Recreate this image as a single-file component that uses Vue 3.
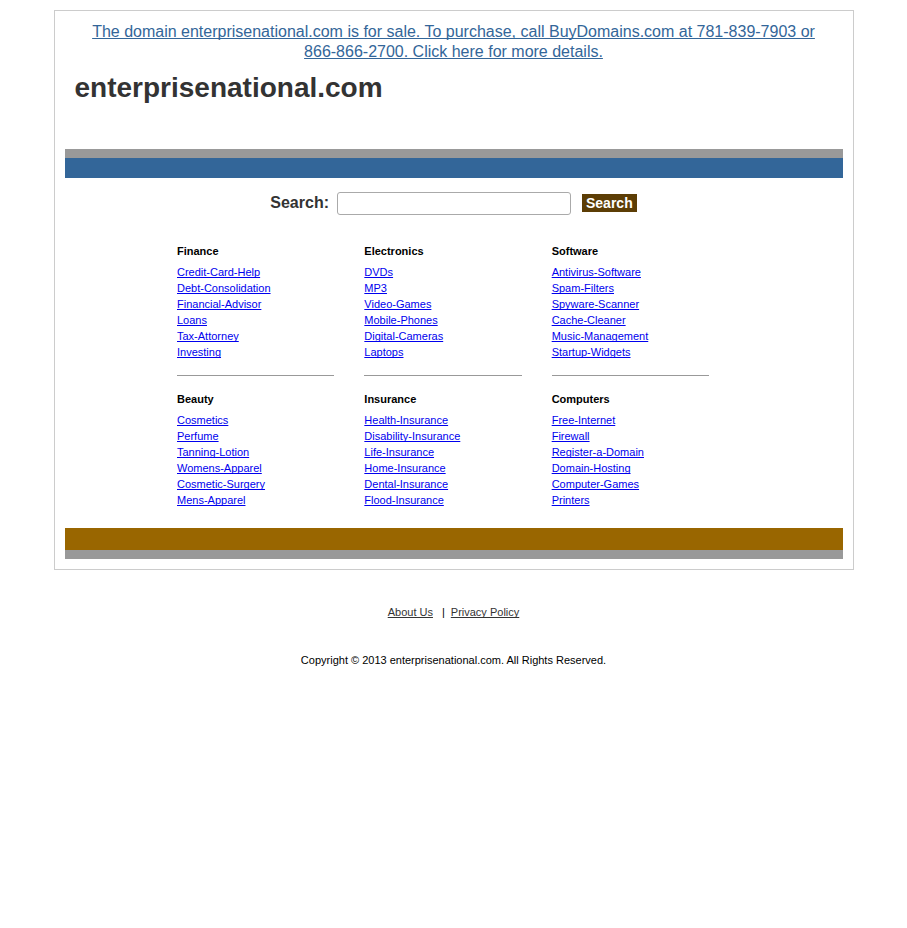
<script setup>
import { ref } from 'vue'

const domain = 'enterprisenational.com'
const query = ref('')

const categories = [
  { name: 'Finance', links: ['Credit-Card-Help', 'Debt-Consolidation', 'Financial-Advisor', 'Loans', 'Tax-Attorney', 'Investing'] },
  { name: 'Electronics', links: ['DVDs', 'MP3', 'Video-Games', 'Mobile-Phones', 'Digital-Cameras', 'Laptops'] },
  { name: 'Software', links: ['Antivirus-Software', 'Spam-Filters', 'Spyware-Scanner', 'Cache-Cleaner', 'Music-Management', 'Startup-Widgets'] },
  { name: 'Beauty', links: ['Cosmetics', 'Perfume', 'Tanning-Lotion', 'Womens-Apparel', 'Cosmetic-Surgery', 'Mens-Apparel'] },
  { name: 'Insurance', links: ['Health-Insurance', 'Disability-Insurance', 'Life-Insurance', 'Home-Insurance', 'Dental-Insurance', 'Flood-Insurance'] },
  { name: 'Computers', links: ['Free-Internet', 'Firewall', 'Register-a-Domain', 'Domain-Hosting', 'Computer-Games', 'Printers'] }
]
</script>

<template>
  <div class="page">
    <main class="panel">
      <header class="header">
        <p class="sale">
          <a href="#">The domain {{ domain }} is for sale. To purchase, call BuyDomains.com at 781-839-7903 or 866-866-2700. Click here for more details.</a>
        </p>
        <h1 class="title">{{ domain }}</h1>
      </header>

      <div class="bar-top"></div>

      <form class="search" @submit.prevent>
        <label class="search-label" for="query">Search:</label>
        <input id="query" v-model="query" class="search-input" type="text" />
        <button class="search-button" type="submit">Search</button>
      </form>

      <div class="categories">
        <section v-for="category in categories" :key="category.name" class="category">
          <h2 class="category-name">{{ category.name }}</h2>
          <ul class="links">
            <li v-for="link in category.links" :key="link"><a href="#">{{ link }}</a></li>
          </ul>
        </section>
      </div>

      <div class="bar-bottom"></div>
    </main>

    <footer class="footer">
      <nav class="footer-nav">
        <a href="#">About Us</a>
        <span class="separator">|</span>
        <a href="#">Privacy Policy</a>
      </nav>
      <p class="copyright">Copyright © 2013 {{ domain }}. All Rights Reserved.</p>
    </footer>
  </div>
</template>

<style>
body {
  margin: 0;
  background: #fff;
}
</style>

<style scoped>
.page {
  padding: 10px;
  font-family: "Liberation Sans", Arial, Helvetica, sans-serif;
  font-size: 11px;
  line-height: 16px;
  color: #000;
}

a {
  text-decoration-skip-ink: none;
}

.panel {
  box-sizing: border-box;
  max-width: 800px;
  margin: 0 auto;
  padding: 10px;
  border: 1px solid #ccc;
}

.header {
  padding: 1px 10px 45px;
}

.sale {
  margin: 0;
  text-align: center;
  font-size: 16px;
  line-height: 20px;
}

.sale a {
  color: #369;
}

.title {
  margin: 9px 0 0;
  font-size: 28px;
  line-height: 33px;
  color: #333;
}

.bar-top {
  height: 20px;
  border-top: 9px solid #999;
  background: #369;
}

.bar-bottom {
  height: 22px;
  border-bottom: 9px solid #999;
  background: #960;
}

.search {
  display: flex;
  align-items: flex-start;
  justify-content: center;
  padding: 14px 0 28px;
}

.search-label {
  margin-right: 8px;
  font-size: 16px;
  line-height: 22px;
  font-weight: bold;
  color: #333;
}

.search-input {
  box-sizing: border-box;
  width: 234px;
  height: 23px;
  margin-right: 11px;
  padding: 1px 4px;
  border: 1px solid #aaa;
  border-radius: 3px;
  background: #fff;
  font: inherit;
  font-size: 14px;
}

.search-button {
  margin-top: 2px;
  padding: 0 4px;
  border: 0;
  background: #5c3d05;
  font-family: inherit;
  font-size: 14px;
  line-height: 18px;
  font-weight: bold;
  color: #fff;
}

.categories {
  display: grid;
  grid-template-columns: repeat(3, 1fr);
  gap: 15px 30px;
  max-width: 532px;
  margin: 0 auto;
  padding: 0 21px 20px 0;
}

.category:nth-child(-n + 3) {
  padding-bottom: 15px;
  border-bottom: 1px solid #999;
}

.category-name {
  margin: 0 0 5px;
  font-size: 11px;
  line-height: 16px;
}

.links {
  margin: 0;
  padding: 0;
  list-style: none;
}

.links a {
  color: #00e;
}

.footer {
  padding-top: 34px;
  text-align: center;
}

.footer-nav {
  display: flex;
  justify-content: center;
  gap: 6px;
}

.footer-nav a {
  color: #333;
}

.separator {
  padding-left: 3px;
}

.copyright {
  margin: 32px 0 0;
}
</style>
